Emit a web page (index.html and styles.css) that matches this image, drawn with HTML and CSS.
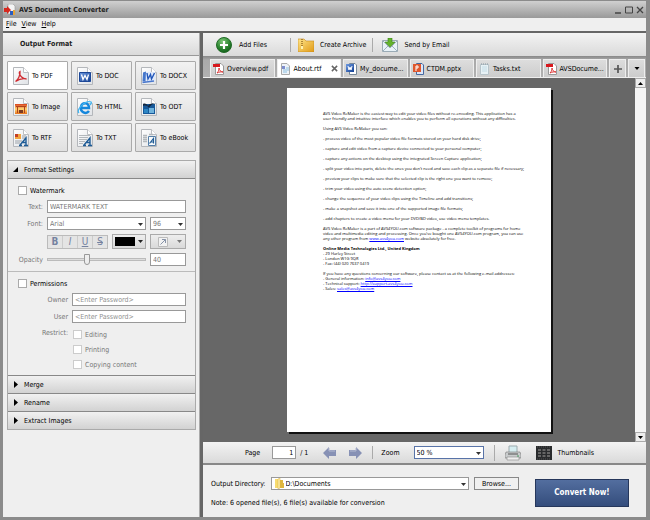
FILE: index.html
```html
<!DOCTYPE html>
<html lang="en">
<head>
<meta charset="utf-8">
<title>AVS Document Converter</title>
<link rel="stylesheet" href="styles.css">
</head>
<body>
<svg class="sprite" aria-hidden="true">
  <defs>
    <linearGradient id="blue" x1="0" y1="0" x2="1" y2="1"><stop offset="0" stop-color="#6f9ae0"/><stop offset="1" stop-color="#123f92"/></linearGradient>
    <linearGradient id="gold" x1="0" y1="0" x2="1" y2="1"><stop offset="0" stop-color="#ffe58a"/><stop offset="1" stop-color="#e09a16"/></linearGradient>
    <linearGradient id="sunset" x1="0" y1="0" x2="0" y2="1"><stop offset="0" stop-color="#d8401c"/><stop offset=".5" stop-color="#ffd873"/><stop offset="1" stop-color="#e8741e"/></linearGradient>
    <linearGradient id="paper" x1="0" y1="0" x2="1" y2="1"><stop offset="0" stop-color="#fff"/><stop offset="1" stop-color="#dfe2e6"/></linearGradient>
    <radialGradient id="green" cx=".4" cy=".25" r=".8"><stop offset="0" stop-color="#7cc676"/><stop offset=".6" stop-color="#2b8530"/><stop offset="1" stop-color="#125c1a"/></radialGradient>
    <symbol id="page" viewBox="0 0 16 18"><path d="M.5.5h10l5 5v12H.5z" fill="url(#paper)" stroke="#b4b7bb"/><path d="M10.500.5v5h5" fill="#fff" stroke="#bcbfc3"/></symbol>
    <symbol id="letter-a" viewBox="0 0 16 18"><path d="M6 16.500h3M11 16.500h4M7 16l6-7v7M9.500 13.500H13" fill="none" stroke="#1f5c96" stroke-width="1.400"/></symbol>
    <symbol id="down" viewBox="0 0 5 3"><path d="M0 0h5L2.500 3z" fill="currentColor"/></symbol>
    <symbol id="pdf-small" viewBox="0 0 11 12"><path d="M2.500.5H8L10.500 3v8.500h-8z" fill="#fff" stroke="#999"/><path d="M0 1h7v3H0z" fill="#d8171d"/><path d="M4 10c2-2 2-4 2-5 0 2 2 4 4 4-2-.5-4 0-6 1z" fill="none" stroke="#d33"/></symbol>
    <symbol id="arrow-left" viewBox="0 0 13 12"><path d="M6 0v3h7v6H6v3L0 6z" fill="#8791b5"/><path d="M6 1v3h6" fill="none" stroke="#b4bbd2"/></symbol>
    <symbol id="folder" viewBox="0 0 9 11"><path d="M0 1h4v9H0z" fill="#f8dc70"/><path d="M3 1l2-1v10l-2 1z" fill="#fff0ac" stroke="#d4ad3d" stroke-width=".5"/><path d="M5 2h3v3h1v5H5z" fill="#dfb63f"/></symbol>
  </defs>
</svg>

<div class="window">
  <header class="titlebar">
    <svg class="app-icon" viewBox="0 0 12 12" aria-hidden="true"><path d="M4 0h5l2 2v8H4z" fill="#f4f4f4" stroke="#999" stroke-width=".6"/><path d="M0 4h3V2l4 4-4 4V8H0z" fill="#d6281e"/><path d="M6 7h3v4H6z" fill="#295cc0"/><path d="M9 6h2v5H9z" fill="#e5a33b"/></svg>
    <h1>AVS Document Converter</h1>
    <div class="window-buttons">
      <button type="button" aria-label="Minimize"><svg viewBox="0 0 8 8"><path d="M1 7h6" stroke="#444" stroke-width="1.500"/></svg></button>
      <button type="button" aria-label="Maximize"><svg viewBox="0 0 8 8"><path d="M.5 1h7v6h-7z" fill="none" stroke="#444"/></svg></button>
      <button type="button" aria-label="Close"><svg viewBox="0 0 8 8"><path d="M1 1l6 6M7 1L1 7" stroke="#444" stroke-width="1.300"/></svg></button>
    </div>
  </header>
  <nav class="menubar"><a href="#file"><u>F</u>ile</a><a href="#view"><u>V</u>iew</a><a href="#help"><u>H</u>elp</a></nav>

  <div class="workspace">
    <aside class="sidebar">
      <h2 class="bar sidebar-title">Output Format</h2>
      <div class="formats">
        <button type="button" class="format selected"><svg viewBox="0 0 16 18"><use href="#page"/><path d="M2.500 14.500C5 13 7.500 8 7 4.500c-1.500 1 0 7 6.500 7.500-3.500-1-8 .5-11 2.500z" fill="none" stroke="#cf2a30" stroke-width="1.300"/></svg>To PDF</button>
        <button type="button" class="format"><svg viewBox="0 0 16 18"><use href="#page"/><path d="M2.500 5.500h11v9h-11z" fill="url(#blue)" stroke="#1c4797"/><path d="M4.500 7.500l1.500 5 2-4 2 4 1.500-5" fill="none" stroke="#fff" stroke-width="1.300"/></svg>To DOC</button>
        <button type="button" class="format"><svg viewBox="0 0 16 18"><use href="#page"/><path d="M2 5.500l3-1v10H1.500z" fill="#4577cc"/><path d="M5 5h9v9H4.500z" fill="#dfe9fa"/><path d="M6 6l1 6 2.500-4.500 1 4.500L13.500 6" fill="none" stroke="#2257ba" stroke-width="1.400"/><path d="M1.500 15.500L13 14" stroke="#4a78cd" stroke-width="1.300"/></svg>To DOCX</button>
        <button type="button" class="format"><svg viewBox="0 0 16 18"><use href="#page"/><path d="M2 6h12v10H2z" fill="url(#sunset)"/><path d="M3 8h10v1H3zM4 9h1v6H4zM11 9h1v6h-1z" fill="#b0421d"/><path d="M6 12h4v3H6z" fill="#7b3a22"/></svg>To Image</button>
        <button type="button" class="format"><svg viewBox="0 0 16 18"><use href="#page"/><path d="M12 13c-3 4-9 1-8-4 1-5 8-5 8 1H5" fill="none" stroke="#1687dc" stroke-width="2.500"/><path d="M2 15C-1 12 8 2 14 4c1 1 0 2-1 3" fill="none" stroke="#41b5f2" stroke-width="1.300"/></svg>To HTML</button>
        <button type="button" class="format"><svg viewBox="0 0 16 18"><use href="#page"/><path d="M2 6h12v10H2z" fill="#17599a"/><path d="M2 6c2-1 4 0 5 2 1-2 4-3 6-2-2 0-4 2-5 4C7 8 5 7 2 8z" fill="#12263f"/><path d="M8 10h5v5H8z" fill="#70b4dd"/><path d="M3 11h4v4H3z" fill="#2c86c4"/></svg>To ODT</button>
        <button type="button" class="format"><svg viewBox="0 0 16 18"><use href="#page"/><path d="M2 5h6v5H2z" fill="#f2a541"/><path d="M2 5h3v3H2z" fill="#c43e24"/><path d="M9 7h4M9 9h4M2 12h7M2 14h5" stroke="#9aa1a8"/><use href="#letter-a"/></svg>To RTF</button>
        <button type="button" class="format"><svg viewBox="0 0 16 18"><use href="#page"/><path d="M2 6.500h11M2 8.500h9M2 10.500h8M2 12.500h6M2 14.500h4" stroke="#b3b8bc"/><use href="#letter-a"/></svg>To TXT</button>
        <button type="button" class="format"><svg viewBox="0 0 16 18"><use href="#page"/><path d="M2 6.500h4M2 8.500h4M2 10.500h4M2 12.500h4M8 5.500h4" stroke="#b3b8bc" stroke-width="1.500"/><path d="M7.500 7.500h7v9h-7z" fill="#f7fafc" stroke="#557fa8"/><path d="M8.500 14.500l4-5v5M10 13h2.500" fill="none" stroke="#1f5c96" stroke-width="1.200"/></svg>To eBook</button>
      </div>

      <div class="accordion">
        <button type="button" class="section-head expanded" aria-expanded="true"><svg viewBox="0 0 5 5"><path d="M5 0v5H0z"/></svg>Format Settings</button>
        <div class="settings">
          <div class="group">
            <label class="check"><input type="checkbox">Watermark</label>
            <div class="row"><label for="wm-text">Text:</label><input id="wm-text" class="field grow" type="text" value="WATERMARK TEXT"></div>
            <div class="row"><label for="wm-font">Font:</label>
              <span class="select grow"><select id="wm-font"><option>Arial</option></select><svg><use href="#down"/></svg></span>
              <span class="select small"><select aria-label="Font size"><option>96</option></select><svg><use href="#down"/></svg></span>
            </div>
            <div class="row tools"><span class="spacer"></span>
              <div class="styles"><button type="button"><b>B</b></button><button type="button"><i>I</i></button><button type="button"><u>U</u></button><button type="button"><s>S</s></button></div>
              <button type="button" class="tool color" aria-label="Text color"><span class="swatch"></span><svg class="caret"><use href="#down"/></svg></button>
              <button type="button" class="tool direction" aria-label="Text direction"><svg class="diagonal" viewBox="0 0 10 10"><path d="M.5.5h9v9h-9z" fill="#f2f2f2" stroke="#bbb"/><path d="M2.500 7.500l5-5M4 2.500h3.500V6" fill="none" stroke="#8793a8"/></svg><svg class="caret"><use href="#down"/></svg></button>
            </div>
            <div class="row"><label class="opacity" for="wm-opacity">Opacity</label><input id="wm-opacity" class="grow" type="range" value="40"><input class="field small" type="text" value="40" aria-label="Opacity value"></div>
          </div>
          <div class="group">
            <label class="check"><input type="checkbox">Permissions</label>
            <div class="row wide"><label for="owner">Owner</label><input id="owner" class="field grow" type="text" placeholder="&lt;Enter Password&gt;"></div>
            <div class="row wide"><label for="user">User</label><input id="user" class="field grow" type="text" placeholder="&lt;Enter Password&gt;"></div>
            <div class="row wide restrict"><span class="label">Restrict:</span>
              <div class="options"><label class="check"><input type="checkbox">Editing</label><label class="check"><input type="checkbox">Printing</label><label class="check"><input type="checkbox">Copying content</label></div>
            </div>
          </div>
        </div>
        <button type="button" class="section-head"><svg viewBox="0 0 5 7"><path d="M1 0l4 3.500L1 7z"/></svg>Merge</button>
        <button type="button" class="section-head"><svg viewBox="0 0 5 7"><path d="M1 0l4 3.500L1 7z"/></svg>Rename</button>
        <button type="button" class="section-head"><svg viewBox="0 0 5 7"><path d="M1 0l4 3.500L1 7z"/></svg>Extract Images</button>
      </div>
    </aside>

    <main class="content">
      <div class="bar toolbar">
        <button type="button"><svg class="add" viewBox="0 0 16 16"><circle cx="8" cy="8" r="7.500" fill="url(#green)" stroke="#226b27"/><path d="M8 4v8M4 8h8" stroke="#fff" stroke-width="2.200"/></svg>Add Files</button>
        <button type="button"><svg viewBox="0 0 16 14"><path d="M0 1h6l2 2h8v11H0z" fill="url(#gold)" stroke="#c78a1d" stroke-width=".6"/><path d="M4 1v8" stroke="#966d26" stroke-width="1.500" stroke-dasharray="1 1"/><path d="M3 8h2v3H3z" fill="#fff2b2"/></svg>Create Archive</button>
        <button type="button"><svg viewBox="0 0 16 14"><path d="M.5 2.500h15v11H.5z" fill="#e8f2f8" stroke="#9aabb6"/><path d="M1 13l5-5M15 13l-5-5M1 3l7 7 7-7" fill="none" stroke="#9eb1be"/><path d="M6 0h4v4h3L8 9 3 4h3z" fill="#63b32d" stroke="#398317" stroke-width=".6"/></svg>Send by Email</button>
      </div>
      <div class="tabs" role="tablist">
        <button type="button" class="tab" role="tab"><svg><use href="#pdf-small"/></svg><span>Overview.pdf</span></button>
        <button type="button" class="tab active" role="tab" aria-selected="true"><svg viewBox="0 0 11 12"><path d="M1.500.5H7L9.500 3v8.500h-8z" fill="#eef3f8" stroke="#aaa"/><path d="M2 3h3v3H2z" fill="#7e8dcc"/><path d="M6 5h3M3 7h6M3 9h4" stroke="#8bbfe0"/></svg><span>About.rtf</span><svg class="close" viewBox="0 0 8 8"><path d="M1 1l6 6M7 1L1 7" stroke="#666" stroke-width="1.700"/></svg></button>
        <button type="button" class="tab" role="tab"><svg viewBox="0 0 11 12"><path d="M3.500.5H9L10.500 2v9.500h-7z" fill="#fff" stroke="#789"/><path d="M0 1h8v8H0z" fill="url(#blue)"/><path d="M2 3l1 4 1-3 1 3 1-4" fill="none" stroke="#fff"/></svg><span>My_docume...</span></button>
        <button type="button" class="tab" role="tab"><svg viewBox="0 0 11 12"><path d="M3.500.5H9L10.500 2v9.500h-7z" fill="#dce6f7" stroke="#4568a0"/><path d="M0 1h8v8H0z" fill="#df572d"/><path d="M3 8V3h2v2H3" fill="none" stroke="#fff"/></svg><span>CTDM.pptx</span></button>
        <button type="button" class="tab" role="tab"><svg viewBox="0 0 11 12"><path d="M1.500 1.500h8v10h-8z" fill="#e7f1f5" stroke="#b7c4ca"/><path d="M2 1h7" stroke="#8996a0" stroke-dasharray="1 1"/><path d="M3 4h5M3 6h5M3 8h5" stroke="#c3dce6"/></svg><span>Tasks.txt</span></button>
        <button type="button" class="tab" role="tab"><svg><use href="#pdf-small"/></svg><span>AVSDocume...</span></button>
        <button type="button" class="tab icon-tab" aria-label="New tab"><svg viewBox="0 0 8 8"><path d="M4 0v8M0 4h8" stroke="#555" stroke-width="1.700"/></svg></button>
        <button type="button" class="tab icon-tab" aria-label="List tabs"><svg class="caret"><use href="#down"/></svg></button>
      </div>

      <div class="viewer">
        <div class="canvas">
          <article class="paper">
            <p>AVS Video ReMaker is the easiest way to edit your video files without re-encoding. This application has a<br>user friendly and intuitive interface which enables you to perform all operations without any difficulties.</p>
            <p>Using AVS Video ReMaker you can:</p>
            <p>- process video of the most popular video file formats stored on your hard disk drive;</p>
            <p>- capture and edit video from a capture device connected to your personal computer;</p>
            <p>- capture any actions on the desktop using the integrated Screen Capture application;</p>
            <p>- split your video into parts, delete the ones you don't need and save each clip as a separate file if necessary;</p>
            <p>- preview your clips to make sure that the selected clip is the right one you want to remove;</p>
            <p>- trim your video using the auto scene detection option;</p>
            <p>- change the sequence of your video clips using the Timeline and add transitions;</p>
            <p>- make a snapshot and save it into one of the supported image file formats;</p>
            <p>- add chapters to create a video menu for your DVD/BD video, use video menu templates.</p>
            <p>AVS Video ReMaker is a part of AVS4YOU.com software package - a complete toolkit of programs for home<br>video and multimedia editing and processing. Once you've bought one AVS4YOU.com program, you can use<br>any other program from <a href="#site">www.avs4you.com</a> website absolutely for free.</p>
            <p><b>Online Media Technologies Ltd., United Kingdom</b><br>- 29 Harley Street<br>- London W1G 9QR<br>- Fax: (44) 020 7637 0419</p>
            <p>If you have any questions concerning our software, please contact us at the following e-mail addresses:<br>- General information: <a href="#info">info@avs4you.com</a><br>- Technical support: <a href="#support">http://support.avs4you.com</a><br>- Sales: <a href="#sales">sales@avs4you.com</a></p>
          </article>
        </div>
        <div class="scrollbar">
          <button type="button" aria-label="Scroll up"><svg class="up"><use href="#down"/></svg></button>
          <button type="button" aria-label="Scroll down"><svg><use href="#down"/></svg></button>
        </div>
      </div>

      <div class="bar pager">
        <div class="pages"><label for="page-no">Page</label><input id="page-no" class="field" type="text" value="1"><span>/ 1</span></div>
        <div class="arrows"><button type="button" aria-label="Previous page"><svg><use href="#arrow-left"/></svg></button><button type="button" aria-label="Next page"><svg class="flip"><use href="#arrow-left"/></svg></button></div>
        <div class="zoom"><label for="zoom">Zoom</label><span class="select"><select id="zoom"><option>50 %</option></select><svg><use href="#down"/></svg></span></div>
        <div class="views"><button type="button" aria-label="Print"><svg viewBox="0 0 16 16"><path d="M4 1h8v7H4z" fill="#d5edf0" stroke="#9ba9ad"/><path d="M1 7h14l1 3v3H0v-3z" fill="#c9cccd" stroke="#777" stroke-width=".6"/><path d="M3 9h10" stroke="#555"/><path d="M2 12h12v3H2z" fill="#eee" stroke="#888" stroke-width=".6"/><path d="M12 11h2" stroke="#4c9c62"/></svg></button>
        <button type="button"><svg viewBox="0 0 16 14"><path d="M0 0h16v14H0z" fill="#292b2d"/><path d="M2 4h12M2 7h12M2 10h12" stroke="#666" stroke-width="2" stroke-dasharray="3 1.500"/><path d="M1 1h14M1 13h14" stroke="#555" stroke-dasharray="1 1"/></svg>Thumbnails</button></div>
      </div>

      <footer class="output">
        <div class="output-fields">
          <div class="directory"><label for="dir">Output Directory:</label><span class="select grow"><svg class="folder" viewBox="0 0 9 11"><use href="#folder"/></svg><select id="dir"><option>D:\Documents</option></select><svg class="caret"><use href="#down"/></svg></span><button type="button" class="browse">Browse...</button></div>
          <p>Note: 6 opened file(s), 6 file(s) available for conversion</p>
        </div>
        <button type="button" class="convert">Convert Now!</button>
      </footer>
    </main>
  </div>
</div>
</body>
</html>
```
FILE: styles.css
```css
* { box-sizing: border-box; }
body {
  margin: 0;
  font: 7px/12px "DejaVu Sans Condensed", "DejaVu Sans", sans-serif;
  color: #000;
}
h1, h2, p { margin: 0; font-size: inherit; }
button, input, select { font: inherit; color: inherit; margin: 0; padding: 0; }
button { display: flex; align-items: center; border: 0; background: none; white-space: nowrap; }
svg { flex: none; display: block; }
.sprite { position: absolute; width: 0; height: 0; }
.grow { flex: 1; min-width: 0; }

.window {
  min-height: 100vh;
  display: flex;
  flex-direction: column;
  border: solid #8b8b8b;
  border-width: 1px 4px 3px 3px;
  background: #efefef;
}
.titlebar {
  height: 17px;
  display: flex;
  align-items: center;
  gap: 3px;
  background: linear-gradient(#d0d0d0, #999);
}
.titlebar h1 { flex: 1; color: #222; font-weight: bold; }
.app-icon { width: 12px; height: 12px; margin-left: 1px; }
.window-buttons { display: flex; gap: 3px; padding-right: 2px; }
.window-buttons svg { width: 8px; height: 8px; }
.menubar { display: flex; gap: 5px; height: 13px; padding-left: 3px; }
.menubar a { color: inherit; text-decoration: none; }

.workspace { flex: 1; display: grid; grid-template-columns: 197px 1fr; border-top: 2px solid #666; }
.sidebar { border-right: 1px solid #aaa; }
.content { display: flex; flex-direction: column; min-width: 0; border-left: 3px solid #666; }
.bar {
  height: 23px;
  display: flex;
  align-items: center;
  background: linear-gradient(#f3f3f3, #dadada);
}
.sidebar-title { padding-left: 17px; border-bottom: 1px solid #999; color: #222; }

.formats { display: grid; grid-template-columns: repeat(3, minmax(0, 1fr)); gap: 2px 3px; padding: 5px 3px 8px 4px; }
.format {
  height: 29px;
  gap: 3px;
  padding-left: 5px;
  border: 1px solid #aaa;
  border-radius: 1px;
  background: linear-gradient(#f2f2f2, #e0e0e0);
}
.format.selected { background: #fff; }
.format svg { width: 16px; height: 18px; }

.accordion { margin: 0 3px 0 4px; border: 1px solid #aaa; }
.section-head {
  width: 100%;
  height: 18px;
  gap: 6px;
  padding-left: 5px;
  border-top: 1px solid #888;
  background: linear-gradient(#f1f1f1, #d2d2d2);
}
.section-head.expanded { border-top: 0; border-bottom: 1px solid #888; }
.section-head svg { width: 5px; height: 7px; }
.group { display: flex; flex-direction: column; gap: 4px; padding: 6px 9px 5px 10px; }
.group + .group { border-top: 1px solid #bbb; }
.check { display: flex; align-items: center; gap: 3px; height: 11px; }
.check input { appearance: none; width: 9px; height: 9px; border: 1px solid #aaa; background: #fff; }
.row { display: flex; align-items: center; gap: 4px; color: #777; height: 13px; }
.row > label, .row > .label, .spacer { width: 25px; flex: none; text-align: right; white-space: nowrap; }
.row > label.opacity { display: flex; justify-content: flex-end; }
.row.wide > label, .row.wide > .label { width: 50px; }
.row.tools { height: 15px; }
.field, .select select {
  width: 100%;
  height: 13px;
  border: 1px solid #999;
  border-radius: 0;
  background: #fff;
  padding: 0 2px;
}
.field.small, .select.small { width: 36px; flex: none; }
.field.grow { width: auto; }
.field::placeholder { color: #909090; }
.select { position: relative; display: flex; }
.select select { appearance: none; padding-right: 10px; }
.select > svg, .caret { width: 5px; height: 3px; }
.select > svg { position: absolute; right: 3px; top: 50%; margin-top: -1px; pointer-events: none; color: #333; }
.styles { flex: 1; display: flex; border: 1px solid #bbb; background: #e4e4e4; }
.styles button { flex: 1; justify-content: center; font-size: 10px; color: #7582a0; }
.styles button + button { border-left: 1px solid #ccc; }
.tool { height: 15px; border: 1px solid #aaa; background: linear-gradient(#eee, #d9d9d9); }
.color { width: 34px; justify-content: space-evenly; color: #222; }
.swatch { width: 20px; height: 9px; background: #000; }
.direction { width: 36px; padding: 0 3px 0 7px; justify-content: space-between; }
.diagonal { width: 10px; height: 10px; }
input[type="range"] { appearance: none; height: 13px; background: none; }
input[type="range"]::-webkit-slider-runnable-track { height: 3px; border: 1px solid #bbb; background: #ddd; }
input[type="range"]::-webkit-slider-thumb { appearance: none; width: 6px; height: 11px; margin-top: -5px; border: 1px solid #999; border-radius: 0 0 3px 3px; background: #eee; }
.row.restrict { height: auto; align-items: flex-start; }
.options { display: flex; flex-direction: column; gap: 4px; padding: 2px 0 0 1px; }
.options .check input { border-color: #ccc; }

.toolbar { padding-left: 13px; }
.toolbar button { gap: 7px; }
.toolbar button + button { margin-left: 23px; padding-left: 7px; border-left: 1px solid #aaa; gap: 6px; }
.toolbar button + button + button { margin-left: 6px; padding-left: 9px; }
.toolbar svg { width: 16px; height: 14px; }
.toolbar .add { height: 16px; }

.tabs {
  display: grid;
  grid-template-columns: repeat(6, minmax(0, 1fr)) 17px 17px;
  gap: 2px;
  padding: 3px 1px 0 7px;
  background: linear-gradient(#888, #aaa 4px, #b0b0b0);
  border-bottom: 1px solid #eee;
}
.tab { height: 18px; gap: 3px; padding: 0 2px; border: 1px solid #eee; border-bottom: 0; background: linear-gradient(#ddd, #ccc); }
.tab svg { width: 11px; height: 12px; }
.tab span { flex: 1; min-width: 0; text-align: left; }
.tab.active { background: #fff; }
.tab .close { width: 7px; height: 7px; }
.tab.icon-tab { justify-content: center; padding: 0; }
.icon-tab svg { width: 8px; height: 8px; }
.icon-tab .caret { width: 6px; height: 3px; }

.viewer { flex: 1; display: flex; background: #676767; }
.canvas { flex: 1; padding: 10px 0; display: flex; justify-content: center; }
.paper {
  width: 264px;
  aspect-ratio: 264 / 342;
  padding: 23px 18px 23px 36px;
  background: #fff;
  box-shadow: 2px 2px 0 #111;
  font: 4px/5px "Open Sans", Arial, sans-serif;
  color: #000;
  white-space: nowrap;
}
.paper p + p { margin-top: 5px; }
.paper a { color: #00f; }
.scrollbar { width: 11px; display: flex; flex-direction: column; justify-content: space-between; background: #f5f5f5; }
.scrollbar button { height: 10px; justify-content: center; border: 1px solid #aaa; background: #eee; }
.scrollbar svg { width: 5px; height: 3px; }
.scrollbar .up { transform: rotate(180deg); }

.pager { border-bottom: 2px solid #888; padding-left: 42px; }
.pager > div { display: flex; align-items: center; }
.pages { gap: 4px; }
.pages .field { width: 24px; margin-left: 8px; text-align: right; }
.arrows { gap: 13px; margin-left: 15px; }
.arrows svg { width: 13px; height: 12px; }
.flip { transform: scaleX(-1); }
.zoom { gap: 14px; margin-left: 10px; padding-left: 8px; border-left: 1px solid #aaa; }
.zoom .select { width: 70px; }
.zoom select { border: 1px solid #5873a8; }
.views { gap: 15px; margin-left: 10px; padding-left: 10px; border-left: 1px solid #aaa; }
.views button { gap: 6px; }
.views svg { width: 16px; height: 16px; }

.output { display: flex; align-items: center; gap: 16px; height: 52px; padding: 4px 17px 0 8px; }
.output-fields { flex: 1; display: flex; flex-direction: column; gap: 7px; }
.directory { display: flex; align-items: center; gap: 5px; }
.directory .select select { padding-left: 14px; }
.select .folder { width: 9px; height: 11px; left: 4px; top: 1px; margin: 0; }
.browse { height: 13px; width: 45px; justify-content: center; border: 1px solid #888; background: #f0f0f0; }
.convert { width: 94px; height: 28px; justify-content: center; border: 1px solid #26375b; background: linear-gradient(#536e9f, #344d7c); color: #fff; font-size: 8px; font-weight: bold; }
```
